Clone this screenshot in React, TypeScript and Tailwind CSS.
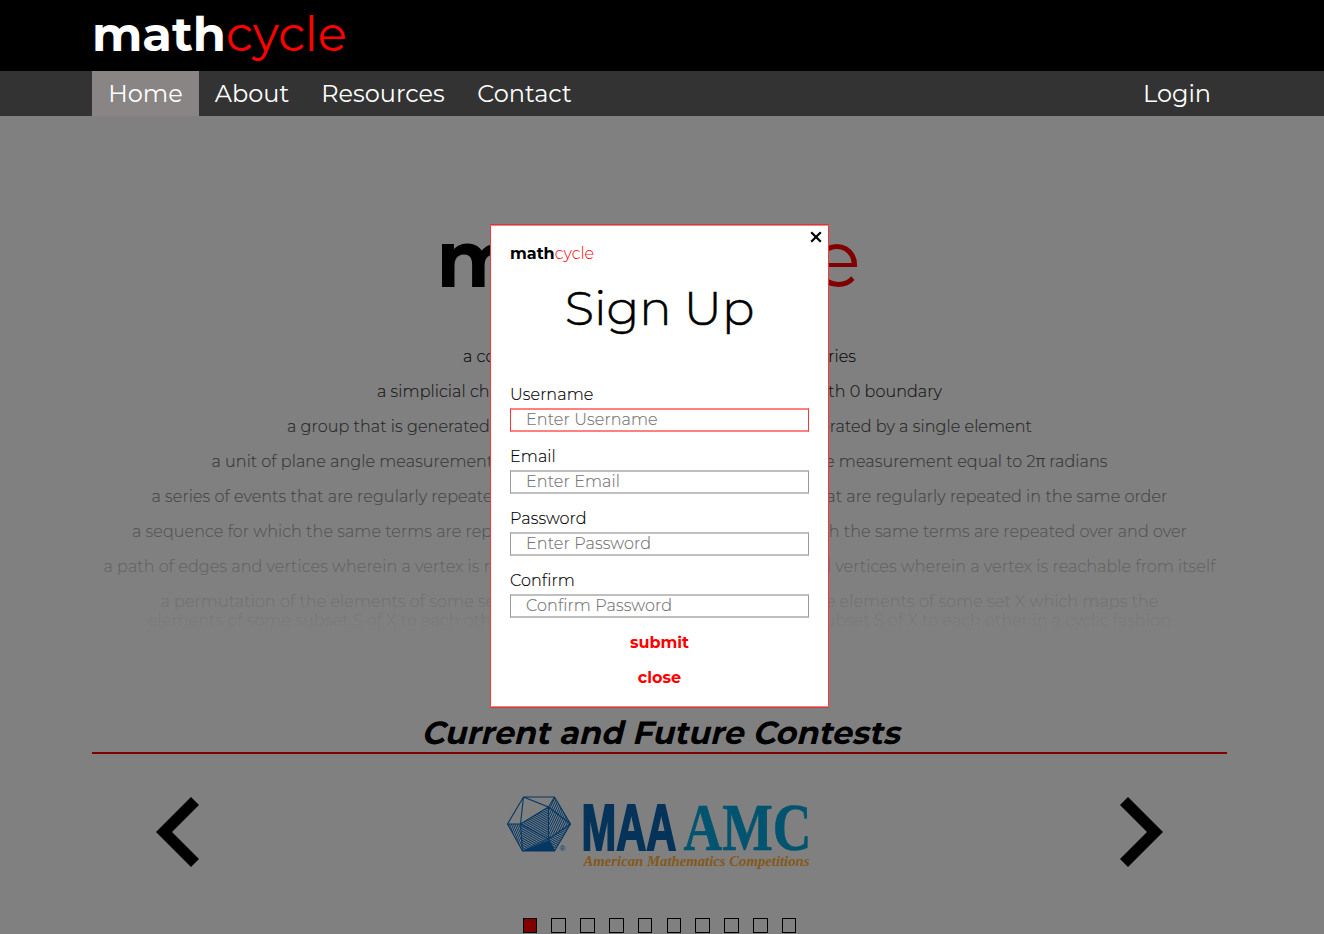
const definitions = [
  { text: 'a complete set of series', width: 393 },
  { text: 'a simplicial chain with 0 boundary', width: 565 },
  { text: 'a group that is generated by a single element', width: 745 },
  { text: 'a unit of plane angle measurement equal to 2π radians', width: 896 },
  { text: 'a series of events that are regularly repeated in the same order', width: 1016 },
  { text: 'a sequence for which the same terms are repeated over and over', width: 1055 },
  { text: 'a path of edges and vertices wherein a vertex is reachable from itself', width: 1112 },
];

const fields = [
  ['Username', 'Enter Username'],
  ['Email', 'Enter Email'],
  ['Password', 'Enter Password'],
  ['Confirm', 'Confirm Password'],
];

const slides = [0, 1, 2, 3, 4, 5, 6, 7, 8, 9];

function Line({ text, width }: { text: string; width: number }) {
  const [before, after] = text.split('π');
  const content = (
    <span>
      {before}
      {after && <span className="font-[Inter] leading-none">π</span>}
      {after}
    </span>
  );
  return (
    <div className="flex justify-between whitespace-nowrap" style={{ width }}>
      <span className="w-1/2 overflow-hidden">{content}</span>
      <span className="flex w-1/2 justify-end overflow-hidden">{content}</span>
    </div>
  );
}

function Wordmark({ className }: { className: string }) {
  return (
    <div className={className}>
      <b>math</b>
      <span className="text-[#ff0000]">cycle</span>
    </div>
  );
}

function Chevron({ className }: { className: string }) {
  return (
    <svg width="43" height="70" viewBox="0 0 43 70" className={className}>
      <path d="M43 8 35 0 0 35l35 35 8-8-27-27z" fill="#000" />
    </svg>
  );
}

function ContestLogo() {
  return (
    <svg width="304" height="76" viewBox="1.5 0 304 76" className="overflow-visible">
      <defs>
        <pattern id="hatch" width="2" height="2" patternUnits="userSpaceOnUse" patternTransform="rotate(30)">
          <rect width="2" height="1.1" fill="#053763" />
        </pattern>
        <pattern id="hatchSteep" width="2" height="2" patternUnits="userSpaceOnUse" patternTransform="rotate(-65)">
          <rect width="2" height="1" fill="#053763" />
        </pattern>
      </defs>
      <path d="M14 28 42 11v32z" fill="url(#hatch)" />
      <path d="M48 1 64 28 42 11zM1 28h13l2 26zM42 11 64 28 42 43z" fill="url(#hatchSteep)" />
      <path d="M14 28 42 43 16 54zM42 43 64 28 48 54z" fill="url(#hatch)" />
      <path d="M16 55 42 44l7 11z" fill="#053763" />
      <path
        d="M17 1h31l16 27-16 27H16L1 28zM17 1 14 28 1 28M17 1l25 10L48 1M14 28 42 11l22 17-22 15zM42 11v32l6 12M14 28l2 27 26-12"
        fill="none"
        stroke="#053763"
        strokeWidth="1.1"
      />
      <text x="53" y="55" fontFamily="Liberation Sans" fontSize="8" fill="#053763">®</text>
      <text x="75" y="54" fontFamily="Liberation Sans" fontWeight="700" fontSize="64" textLength="95" lengthAdjust="spacingAndGlyphs" fill="#053359" stroke="#053359" strokeWidth="2">MAA</text>
      <text x="177" y="54" fontFamily="Liberation Serif" fontWeight="700" fontSize="67" textLength="128" lengthAdjust="spacingAndGlyphs" fill="#00546f" stroke="#00546f" strokeWidth="0.6">AMC</text>
      <text x="77" y="70" fontFamily="Liberation Serif" fontWeight="700" fontStyle="italic" fontSize="14" textLength="226" lengthAdjust="spacingAndGlyphs" fill="#85581a">American Mathematics Competitions</text>
    </svg>
  );
}

export default function App() {
  return (
    <div className="relative flex h-[934px] w-full flex-col overflow-hidden bg-[#808080] font-['Montserrat',Inter,sans-serif] text-black">
      <header className="h-[71px] bg-black pl-[92px]">
        <Wordmark className="pt-[5px] text-[48px] leading-[58px] text-white" />
      </header>
      <nav className="flex h-[45px] bg-[#333] pl-[92px] pr-[97px] text-2xl leading-[45px] text-white">
        <a className="w-[107px] bg-[#8a8585] text-center">Home</a>
        <a className="w-[106px] text-center">About</a>
        <a className="w-[156px] text-center">Resources</a>
        <a className="w-[127px] text-center">Contact</a>
        <a className="ml-auto w-[100px] text-center">Login</a>
      </nav>

      <main className="flex w-[1319px] flex-col items-center">
        <Wordmark className="mt-[94px] mr-[22px] text-[80px] leading-[98px] [&>span]:text-[#800000]" />
        <div className="relative mt-[39px] flex flex-col items-center gap-[15px] text-base leading-5 font-light tracking-[0.07px] [-webkit-text-stroke:0.15px]">
          {definitions.map((d) => (
            <Line key={d.text} {...d} />
          ))}
          <div className="flex flex-col items-center leading-[19px]">
            <Line text="a permutation of the elements of some set X which maps the" width={998} />
            <Line text="elements of some subset S of X to each other in a cyclic fashion" width={1023} />
          </div>
          <div className="absolute inset-x-0 -top-2 -bottom-2 bg-linear-to-b from-[#80808000] to-[#808080]" />
        </div>
        <h2 className="mt-[84px] flex w-[1135px] justify-center border-b-2 border-[#800000] pl-[7px] text-[32px] leading-[38px] font-bold">
          <span className="-skew-x-14">Current and Future Contests</span>
        </h2>
        <div className="mt-[42px] flex w-[1007px] items-start justify-between">
          <Chevron className="mt-px" />
          <ContestLogo />
          <Chevron className="mt-px -scale-x-100" />
        </div>
        <div className="mt-[46px] flex gap-[14.3px]">
          {slides.map((i) => (
            <i key={i} className={`h-[15px] w-[14.5px] border border-black ${i === 0 ? 'bg-[#800000]' : ''}`} />
          ))}
        </div>
      </main>

      <section className="absolute top-[225px] left-[490px] flex h-[482px] w-[339px] flex-col border border-x-[#ff3333] border-y-[#ff8080] bg-white px-[19px] shadow-[0_1px_#bf4040,0_-1px_#bf4040]">
        <svg className="absolute top-[5px] right-[6px]" width="12" height="12" viewBox="0 0 12 12">
          <path d="m1.2 1.2 9.6 9.6m0-9.6-9.6 9.6" stroke="#000" strokeWidth="2.2" />
        </svg>
        <Wordmark className="mt-[18px] text-base leading-5 [&>span]:font-light" />
        <h1 className="mt-[14px] text-center text-[48px] leading-[60px] font-light [-webkit-text-stroke:0.5px]">Sign Up</h1>
        <form className="mt-[47px] flex flex-col gap-[15px] font-light [-webkit-text-stroke:0.15px]">
          {fields.map(([label, placeholder], i) => (
            <label key={label} className="flex flex-col leading-5 tracking-[0.08px]">
              {label}
              <input
                placeholder={placeholder}
                className={`mt-[3px] h-6 w-[299px] border-x border-y-2 pb-[2px] pl-[15px] tracking-[0.11px] placeholder:text-[#757575] ${
                  i === 0 ? 'border-x-[#ff3333] border-y-[#ff8080]' : 'border-x-[#999] border-y-[#bfbfbf]'
                }`}
              />
            </label>
          ))}
        </form>
        <div className="mt-[15px] flex flex-col items-center gap-[15px] leading-5 font-bold text-[#ff0000]">
          <button>submit</button>
          <button>close</button>
        </div>
      </section>
    </div>
  );
}
